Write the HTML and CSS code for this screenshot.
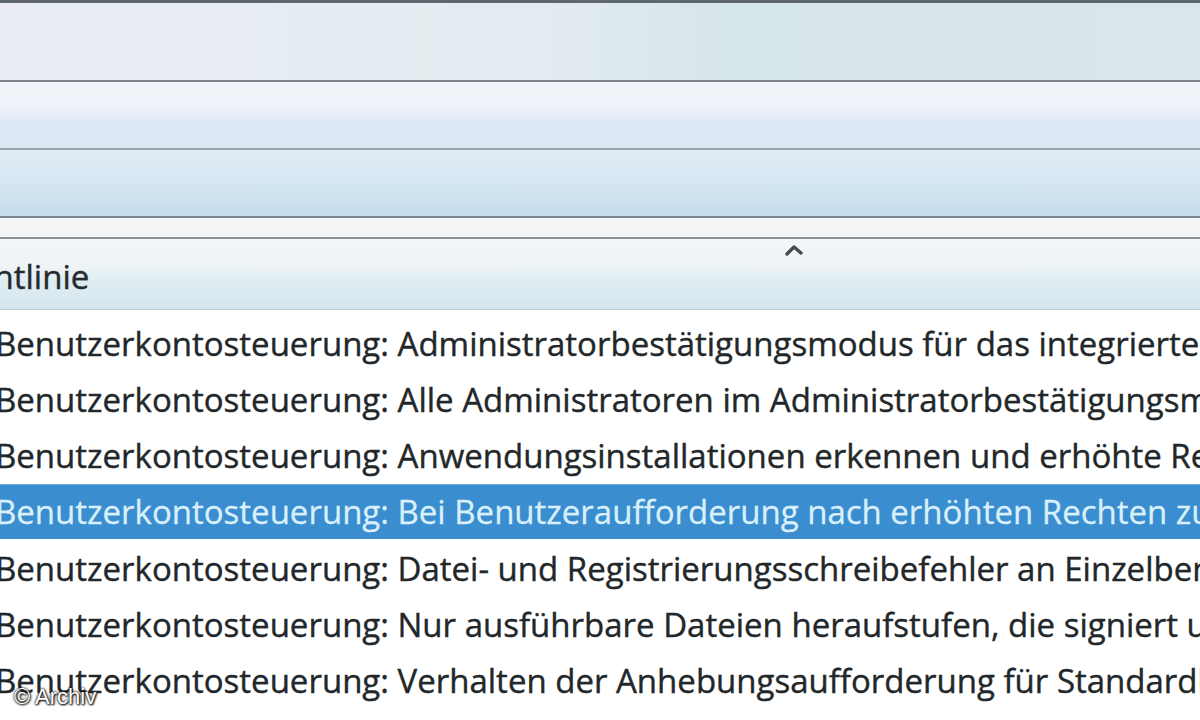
FILE: index.html
```html
<!DOCTYPE html>
<html lang="de">
<head>
<meta charset="utf-8">
<title>Lokale Sicherheitsrichtlinie</title>
<link rel="stylesheet" href="styles.css">
</head>
<body>
<div class="window">
  <div class="band band-title"></div>
  <div class="band band-menu"></div>
  <div class="band band-tool"></div>
  <div class="band band-strip"></div>
  <div class="colhead">
    <span class="colhead-label">Richtlinie</span>
    <svg class="sort" width="18" height="12" viewBox="0 0 18 12"><path d="M2 10 L9 3 L16 9" fill="none" stroke="#454d54" stroke-width="3.4" stroke-linecap="round" stroke-linejoin="round"/></svg>
  </div>
  <ul class="list">
    <li class="row">Benutzerkontosteuerung: Administratorbestätigungsmodus für das integrierte Administratorkonto</li>
    <li class="row">Benutzerkontosteuerung: Alle Administratoren im Administratorbestätigungsmodus ausführen</li>
    <li class="row">Benutzerkontosteuerung: Anwendungsinstallationen erkennen und erhöhte Rechte anfordern</li>
    <li class="row selected">Benutzerkontosteuerung: Bei Benutzeraufforderung nach erhöhten Rechten zum sicheren Desktop wechseln</li>
    <li class="row">Benutzerkontosteuerung: Datei- und Registrierungsschreibefehler an Einzelbenutzerstandorte virtualisieren</li>
    <li class="row">Benutzerkontosteuerung: Nur ausführbare Dateien heraufstufen, die signiert und überprüft sind</li>
    <li class="row">Benutzerkontosteuerung: Verhalten der Anhebungsaufforderung für Standardbenutzer</li>
  </ul>
  <div class="credit">© Archiv</div>
</div>
</body>
</html>
```
FILE: styles.css
```css
html, body {
  margin: 0;
  padding: 0;
  width: 1200px;
  height: 720px;
  overflow: hidden;
  background: #ffffff;
}
.window {
  position: relative;
  width: 1200px;
  height: 720px;
  overflow: hidden;
  font-family: "Open Sans", "Noto Sans", sans-serif;
  color: #1f1f1f;
}
.band {
  width: 100%;
  box-sizing: border-box;
}
.band-title {
  height: 82px;
  border-top: 3px solid #5e676e;
  border-bottom: 2px solid #7b858b;
  background: linear-gradient(90deg, #eaeef4 0%, #e3ecf0 45%, #d7e6e9 60%, #d9e7ea 100%);
}
.band-menu {
  height: 68px;
  border-bottom: 2px solid #9aa2a9;
  background: linear-gradient(180deg, #f1f4f9 0%, #eef1f7 40%, #dfe9f6 60%, #dce7f4 100%);
}
.band-tool {
  height: 68px;
  border-bottom: 2px solid #7a858d;
  background: linear-gradient(180deg, #e2ecf6 0%, #d6e7f2 45%, #c5dcec 100%);
}
.band-strip {
  height: 21px;
  border-bottom: 2px solid #8b9196;
  background: #f3f5f6;
}
.colhead {
  position: relative;
  height: 71px;
  box-sizing: border-box;
  border-bottom: 1px solid #b9ccd5;
  background: linear-gradient(180deg, #f4f6f8 0%, #eef3f6 40%, #dfedf2 60%, #d4e7ee 100%);
  display: flex;
  align-items: center;
  overflow: hidden;
  white-space: nowrap;
}
.colhead-label {
  font-size: 33px;
  margin-left: -51px;
  padding-top: 4px;
  color: #252a2e;
  -webkit-text-stroke: 0.4px #252a2e;
}
.sort {
  position: absolute;
  left: 785px;
  top: 5px;
}
.list {
  list-style: none;
  margin: 0;
  padding: 6px 0 0 0;
}
.row {
  height: 56px;
  line-height: 56px;
  font-size: 33px;
  white-space: nowrap;
  overflow: hidden;
  text-indent: -5px;
  color: #22272a;
  -webkit-text-stroke: 0.4px #22272a;
}
.row.selected {
  height: 54px;
  line-height: 54px;
  margin-bottom: 2px;
  background: #3a8dcf;
  border-top: 1px solid #6fb0e2;
  color: #d9f0fb;
  -webkit-text-stroke: 0.3px #d9f0fb;
}
.credit {
  position: absolute;
  left: 14px;
  top: 684px;
  font-family: "Liberation Sans", Arial, sans-serif;
  font-size: 22px;
  color: #ffffff;
  text-shadow: 0 0 3px #1a1a1a, 0 0 2px #1a1a1a, 1px 1px 2px #000;
}
```
